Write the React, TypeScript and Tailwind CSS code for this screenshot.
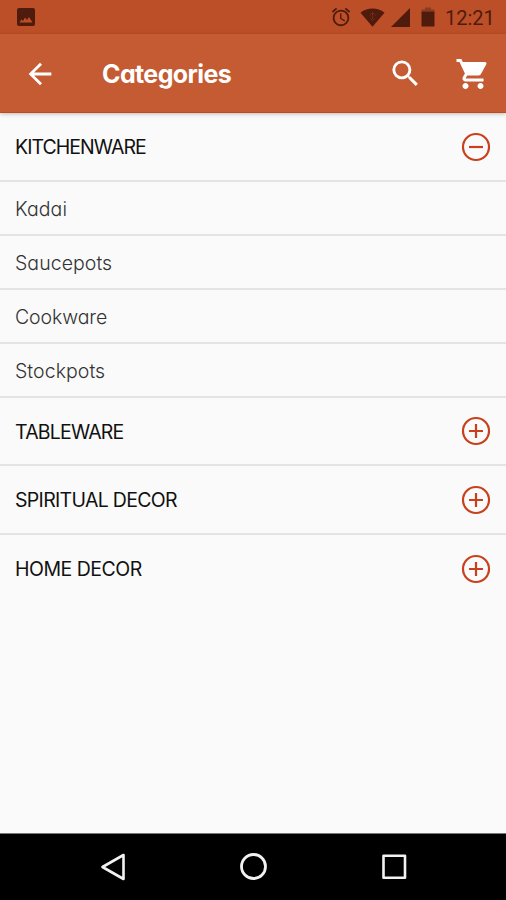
import React from "react";

type Entry = { label: string; text: string; height: string; kind: "open" | "closed" | "item" };

const entries: Entry[] = [
  { label: "KITCHENWARE", text: "tracking-[-0.95px]", height: "h-[69px]", kind: "open" },
  { label: "Kadai", text: "tracking-[0.1px]", height: "h-[54px]", kind: "item" },
  { label: "Saucepots", text: "tracking-[0.05px]", height: "h-[54px]", kind: "item" },
  { label: "Cookware", text: "tracking-[-0.1px]", height: "h-[54px]", kind: "item" },
  { label: "Stockpots", text: "tracking-[0.05px]", height: "h-[54px]", kind: "item" },
  { label: "TABLEWARE", text: "tracking-[-0.8px]", height: "h-[68px]", kind: "closed" },
  { label: "SPIRITUAL DECOR", text: "tracking-[-0.68px]", height: "h-[69px]", kind: "closed" },
  { label: "HOME DECOR", text: "tracking-[-0.5px]", height: "h-[69px]", kind: "closed" },
];

function Toggle({ open }: { open: boolean }) {
  return (
    <svg className="block size-[30px]" viewBox="0 0 30 30" fill="none" stroke="#c8401c" strokeWidth="2.2">
      <circle cx="15" cy="15" r="13" />
      <path d={open ? "M8 15H22" : "M8 15H22M15 8V22"} />
    </svg>
  );
}

function StatusBar() {
  return (
    <div className="flex h-[34px] items-center bg-[#bd4f28] pr-[11px] pl-[17px] text-[#4e1b0d]">
      <svg className="size-[18px]" viewBox="0 0 18 18">
        <rect width="18" height="18" rx="2" fill="currentColor" />
        <path d="M2.500 14.500 4.500 11.500l1.500 1.500L8 9.500l2 2.500 2-3 3.500 5.500z" fill="#bd4f28" />
      </svg>
      <svg className="ml-auto size-[22px]" viewBox="0 0 24 24" fill="currentColor">
        <path d="M22 5.720l-4.600-3.860-1.290 1.530 4.600 3.860L22 5.720zM7.880 3.390L6.600 1.860 2 5.710l1.290 1.530 4.590-3.850zM12.500 8H11v6l4.750 2.850.75-1.230-4-2.370V8zM12 4c-4.970 0-9 4.030-9 9s4.020 9 9 9a9 9 0 1 0 0-18zm0 16c-3.870 0-7-3.130-7-7s3.130-7 7-7 7 3.130 7 7-3.130 7-7 7z" />
      </svg>
      <svg className="ml-[8px] h-[19px] w-[25px]" viewBox="0 0 25 19">
        <path d="M.5 4.800C7.500-.8 17.500-.8 24.500 4.800L12.500 18.800z" fill="currentColor" />
        <path d="M9.500 7.500 12.500 4.500 15.500 7.500M12.500 5v6M10.500 10.500l2 2 2-2" fill="none" stroke="#7a3019" strokeWidth=".8" />
      </svg>
      <svg className="ml-[6px] size-[19px]" viewBox="0 0 19 19">
        <path d="M19 0v19H0z" fill="currentColor" />
      </svg>
      <svg className="ml-[11px] h-[20px] w-[14px]" viewBox="0 0 14 20">
        <path d="M.5 4.500v-2H4V.5h6v2h3.500v2z" fill="#8a3c20" />
        <path d="M.5 4.500h13V19.500h-13z" fill="currentColor" />
      </svg>
      <span className="ml-[10px] w-[50px] pt-[2px] text-[20px] leading-none font-normal whitespace-nowrap [font-family:Roboto,sans-serif]">
        12:21
      </span>
    </div>
  );
}

function AppBar() {
  return (
    <header className="relative z-10 flex h-[79px] items-center border-b border-[#c04c1b] bg-[#c55b33] pt-[1px] pr-[14px] pl-[23px] text-white shadow-[0_1px_4px_rgba(0,0,0,0.25)]">
      <svg className="size-[34px]" viewBox="0 0 24 24" fill="currentColor">
        <path d="M20 11H7.830l5.590-5.590L12 4l-8 8 8 8 1.410-1.410L7.830 13H20v-2z" />
      </svg>
      <h1 className="ml-[45px] pt-[1px] text-[25px] leading-none font-bold tracking-[-0.600px]">Categories</h1>
      <svg className="ml-auto size-[35px]" viewBox="0 0 24 24" fill="currentColor">
        <path d="M15.500 14h-.790l-.280-.270A6.471 6.471 0 0 0 16 9.500 6.500 6.500 0 1 0 9.500 16c1.610 0 3.090-.590 4.230-1.570l.270.280v.790l5 4.990L20.490 19l-4.990-5zm-6 0C7.010 14 5 11.990 5 9.500S7.010 5 9.500 5 14 7.010 14 9.500 11.990 14 9.500 14z" />
      </svg>
      <svg className="ml-[32px] mr-[1px] size-[36px]" viewBox="0 0 24 24" fill="currentColor">
        <path d="M7 18c-1.100 0-1.990.9-1.990 2S5.900 22 7 22s2-.9 2-2-.9-2-2-2zM1 2v2h2l3.600 7.590-1.350 2.450c-.160.280-.250.610-.250.960 0 1.100.9 2 2 2h12v-2H7.420c-.140 0-.250-.110-.250-.250l.030-.120.9-1.630h7.450c.750 0 1.410-.410 1.750-1.030l3.580-6.490A1.003 1.003 0 0 0 20 4H5.210l-.940-2H1zm16 16c-1.100 0-1.990.9-1.990 2s.890 2 1.990 2 2-.9 2-2-.9-2-2-2z" />
      </svg>
    </header>
  );
}

function Row({ entry, last }: { entry: Entry; last: boolean }) {
  const heading = entry.kind !== "item";
  return (
    <li
      className={`flex items-center justify-between border-b-2 pr-[15px] pl-[15px] ${entry.height} ${
        last ? "border-transparent" : "border-[#e4e4e4]"
      }`}
    >
      <span
        className={`pt-[3px] leading-none whitespace-nowrap ${entry.text} ${
          heading ? "text-[19.5px] font-normal text-[#111]" : "text-[19.5px] font-light text-[#333]"
        }`}
      >
        {entry.label}
      </span>
      {heading && <Toggle open={entry.kind === "open"} />}
    </li>
  );
}

export default function App() {
  return (
    <div className="flex h-[900px] w-[506px] flex-col overflow-hidden bg-[#fafafa] [font-family:Inter,'Open_Sans',sans-serif] [font-feature-settings:'cv11']">
      <StatusBar />
      <AppBar />
      <ul className="flex-1">
        {entries.map((entry, i) => (
          <Row key={entry.label} entry={entry} last={i === entries.length - 1} />
        ))}
      </ul>
      <nav className="flex h-[67px] items-center border-t border-[#777] bg-black pl-[100px]">
        <svg className="size-[28px]" viewBox="0 0 28 28" fill="none" stroke="#f2f2f2" strokeWidth="2.600" strokeLinejoin="round">
          <path d="M23.500 2v24L2.500 14z" />
        </svg>
        <svg className="ml-[111px] size-[28px]" viewBox="0 0 28 28" fill="none" stroke="#f2f2f2" strokeWidth="2.800">
          <circle cx="14.500" cy="13.500" r="12" />
        </svg>
        <svg className="ml-[113px] size-[28px]" viewBox="0 0 28 28" fill="none" stroke="#f2f2f2" strokeWidth="2.600" strokeLinejoin="round">
          <rect x="3.500" y="2.800" width="21.500" height="22" />
        </svg>
      </nav>
    </div>
  );
}
